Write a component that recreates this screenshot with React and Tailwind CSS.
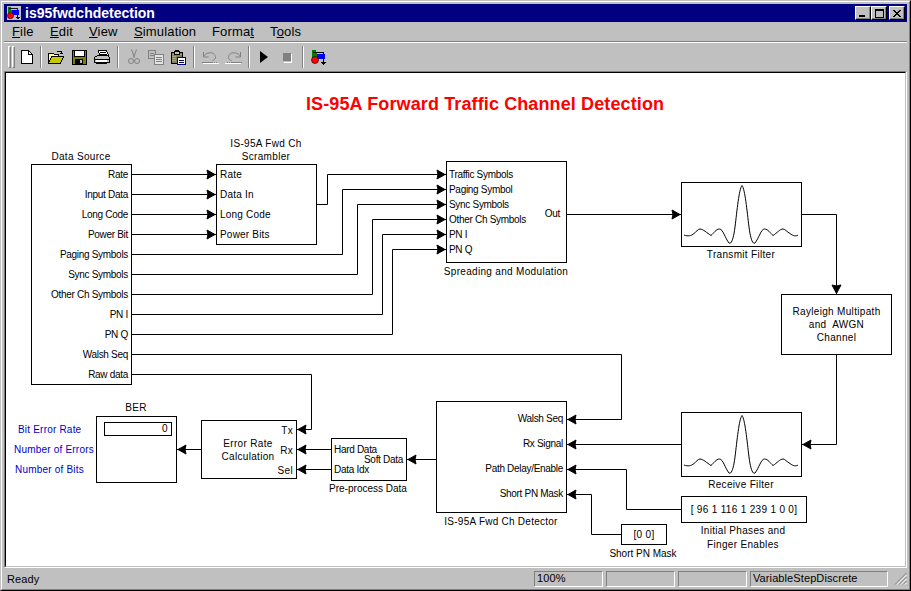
const FONT = "font-['Liberation_Sans',Arial,sans-serif]";

function Grip({ className = "" }) {
  return <div className={`border border-t-white border-l-white border-r-[#808080] border-b-[#808080] ${className}`} />;
}

function WinBtn({ children, className = "" }) {
  return (
    <div className={`w-[16px] h-[14px] bg-[#c0c0c0] border border-t-white border-l-white border-r-black border-b-black shadow-[inset_-1px_-1px_0_#808080] flex items-center justify-center ${className}`}>
      {children}
    </div>
  );
}

function Sep() {
  return <div className="w-[2px] h-[22px] border-l border-l-[#808080] border-r border-r-white" />;
}

function ToolBtn({ children, className = "" }) {
  return <div className={`w-[23px] h-[22px] flex items-center justify-center ${className}`}>{children}</div>;
}

const IconNew = () => (
  <svg width="16" height="16" viewBox="0 0 16 16" shapeRendering="crispEdges">
    <path d="M2.500 1.500h7l4 4v9h-11z" fill="#fff" stroke="#000" />
    <path d="M9.500 1.500v4h4" fill="none" stroke="#000" />
  </svg>
);
const IconOpen = () => (
  <svg width="16" height="16" viewBox="0 0 16 16" shapeRendering="crispEdges">
    <path d="M0.500 4.500h5l1 1h4v2h-7l-3 7z" fill="#ffff99" stroke="#000" />
    <path d="M0.500 14.500l3-7h12l-3 7z" fill="#c8c800" stroke="#000" />
    <path d="M9 2h2M11 2l2 1M13 2v3M12 4h3" stroke="#000" fill="none" />
  </svg>
);
const IconSave = () => (
  <svg width="16" height="16" viewBox="0 0 16 16" shapeRendering="crispEdges">
    <rect x="1" y="1" width="14" height="14" fill="#808000" stroke="#000" />
    <rect x="3" y="1" width="10" height="6" fill="#fff" stroke="#000" />
    <rect x="4" y="10" width="8" height="5" fill="#000" />
    <rect x="9" y="11" width="2" height="3" fill="#c0c0c0" />
  </svg>
);
const IconPrint = () => (
  <svg width="17" height="16" viewBox="0 0 17 16" shapeRendering="crispEdges">
    <path d="M5.500 1.500h8l2 5h-9z" fill="#fff" stroke="#000" />
    <path d="M7 3h6M7 5h7" stroke="#000" />
    <path d="M1.500 8.500l3-2h10l2 2v5h-15z" fill="#c0c0c0" stroke="#000" />
    <path d="M2 10h14" stroke="#000" />
    <path d="M3 14h11v1H3z" fill="#000" />
    <rect x="3" y="11" width="11" height="2" fill="#fff" />
  </svg>
);
const IconCut = () => (
  <svg width="16" height="16" viewBox="0 0 16 16" fill="none" stroke="#808080">
    <path d="M5.500 0.500l3 8M10.500 0.500l-3 8" />
    <circle cx="5" cy="12" r="2.500" />
    <circle cx="11" cy="12" r="2.500" />
  </svg>
);
const IconCopy = () => (
  <svg width="16" height="16" viewBox="0 0 16 16" shapeRendering="crispEdges">
    <path d="M0.500 1.500h7v8h-7z" fill="#c0c0c0" stroke="#808080" />
    <path d="M2 4h4M2 6h4" stroke="#808080" />
    <path d="M6.500 5.500h9v10h-9z" fill="#e4e4e4" stroke="#808080" />
    <path d="M8 8h6M8 10h6M8 12h6" stroke="#808080" />
  </svg>
);
const IconPaste = () => (
  <svg width="16" height="16" viewBox="0 0 16 16" shapeRendering="crispEdges">
    <path d="M1.500 3.500h11v11h-11z" fill="#808060" stroke="#000" />
    <path d="M2 5h10M2 7h4M2 9h4M2 11h4" stroke="#a8a880" />
    <path d="M4.500 2.500h5v3h-5z" fill="#c8c8a0" stroke="#000" />
    <path d="M5 1h4" stroke="#000" />
    <path d="M7.500 8.500h8v7h-8z" fill="#fff" stroke="#000080" />
    <path d="M9 11h5M9 13h5" stroke="#000080" />
  </svg>
);
const IconUndo = ({ flip }) => (
  <svg width="17" height="16" viewBox="0 0 17 16" fill="none" stroke="#808080" className={flip ? "-scale-x-100" : ""}>
    <path d="M1.500 3v5h5" />
    <path d="M1.500 7.500c2-4 9-5 11-2s1 5-2 6" />
    <path d="M0 13.500h16" strokeDasharray="11 1 1 1 1 1" />
    <path d="M1 14.500h16" stroke="#fff" />
  </svg>
);
const IconPlay = () => (
  <svg width="16" height="16" viewBox="0 0 16 16">
    <path d="M4 2l8 6-8 6z" fill="#000" />
  </svg>
);
const IconStop = () => (
  <svg width="16" height="16" viewBox="0 0 16 16" shapeRendering="crispEdges">
    <rect x="4" y="4" width="8" height="8" fill="#808080" />
    <path d="M12 4v9H4" stroke="#fff" fill="none" transform="translate(.5 .5)" />
  </svg>
);
const IconSim = ({ small }) => (
  <svg width={small ? 14 : 16} height={small ? 14 : 16} viewBox="0 0 16 16" shapeRendering="crispEdges">
    <rect x="0" y="0" width="16" height="16" fill={small ? "#c0c0c0" : "none"} />
    <path d="M1 1h4v3h1v5H1z" fill="#008000" />
    <rect x="6" y="5" width="8" height="5" fill="#0000ff" />
    <path d="M2 3h10v11" stroke="#000" fill="none" />
    <circle cx="4" cy="11" r="3.500" fill="#ff0000" stroke="#000" strokeWidth=".6" shapeRendering="auto" />
    <path d="M10 13h5M11 14h3M12 15h1" stroke="#000" />
  </svg>
);

const Ripple = () => (
  <svg className="absolute inset-0" width="119" height="63" viewBox="0 0 119 63" fill="none" stroke="#000">
    <path d="M2 52C6 53.500 9 53 12 50.500C14 49 16 46 18 46C21 46 25 50 29 52.500C32 50 34 46 37.500 46C41 46 43 55 47 60C50 62 52 52 53 44C55 28 57 6 60 2.500C63 6 65 28 67 44C68 52 70 62 73 60C77 55 79 46 82.500 46C86 46 88 50 91 52.500C95 50 98 46 101 46C103 46 105 49 108 50.500C111 53 114 53.500 116 52" />
  </svg>
);

function Wires() {
  const wires = [
    "M126 102.500H210", "M126 122.500H210", "M126 142.500H210", "M126 162.500H210",
    "M311 132.500H321.500V102.500H440",
    "M126 182.500H336.500V117.500H440",
    "M126 202.500H351.500V132.500H440",
    "M126 222.500H366.500V147.500H440",
    "M126 242.500H376.500V162.500H440",
    "M126 262.500H386.500V177.500H440",
    "M561 142.500H675",
    "M795 142.500H830.500V222",
    "M830.500 282V372.500H796",
    "M126 282.500H615.500V347.500H561",
    "M675 372.500H561",
    "M675 437.500H620.500V397.500H561",
    "M615 462.500H585.500V422.500H561",
    "M126 302.500H305.500V357.500H291",
    "M325 377.500H291", "M325 397.500H291",
    "M430 387.500H401",
    "M195 377.500H171",
  ];
  const right = [[210,102.5],[210,122.5],[210,142.5],[210,162.5],[440,102.5],[440,117.5],[440,132.5],[440,147.5],[440,162.5],[440,177.5],[675,142.5]];
  const left = [[561,347.5],[561,372.5],[561,397.5],[561,422.5],[796,372.5],[291,357.5],[291,377.5],[291,397.5],[401,387.5],[171,377.5]];
  return (
    <svg className="absolute inset-0" width="899" height="497" viewBox="0 0 899 497">
      {wires.map((d) => <path key={d} d={d} fill="none" stroke="#000" />)}
      {right.map(([x, y]) => <path key={`r${x}${y}`} d={`M${x - 9} ${y - 4.5}L${x - 1} ${y}L${x - 9} ${y + 4.5}L${x - 8} ${y}Z`} fill="#000" stroke="#000" />)}
      {left.map(([x, y]) => <path key={`l${x}${y}`} d={`M${x + 9} ${y - 4.5}L${x + 1} ${y}L${x + 9} ${y + 4.5}L${x + 8} ${y}Z`} fill="#000" stroke="#000" />)}
      <path d="M830.500 221.500L826 213L830.500 214L835 213Z" fill="#000" stroke="#000" />
    </svg>
  );
}

const boxCls = "absolute bg-white border border-black";
const capCls = "absolute text-center leading-[13px] whitespace-nowrap -translate-x-1/2";

function Row({ h, children }) {
  return <div className={`${h} flex items-center whitespace-nowrap`}>{children}</div>;
}

export default function App() {
  return (
    <div className={`${FONT} w-[911px] h-[591px] bg-[#c0c0c0] flex flex-col overflow-hidden border border-t-[#c0c0c0] border-l-[#c0c0c0] border-r-black border-b-black`}>
      <div className="flex-1 min-h-0 flex flex-col border border-t-white border-l-white border-r-[#808080] border-b-[#808080] p-[2px]">
        {/* title */}
        <div className="h-[18px] shrink-0 bg-[#000080] flex items-center pl-[3px] pr-[2px]">
          <IconSim small />
          <div className="ml-[4px] text-white font-bold text-[14px] leading-none">is95fwdchdetection</div>
          <div className="ml-auto flex items-center">
            <WinBtn>
              <div className="w-[6px] h-[2px] bg-black mt-[6px] -ml-[2px]" />
            </WinBtn>
            <WinBtn>
              <div className="w-[9px] h-[9px] border border-black border-t-2" />
            </WinBtn>
            <WinBtn className="ml-[2px]">
              <svg width="8" height="7" viewBox="0 0 8 7" shapeRendering="crispEdges"><path d="M0 0h2v1h1v1h2V1h1V0h2v1H7v1H6v1H5v1h1v1h1v1h1v1H6V6H5V5H3v1H2v1H0V6h1V5h1V4h1V3H2V2H1V1H0z" fill="#000" /></svg>
            </WinBtn>
          </div>
        </div>
        {/* menu */}
        <div className="h-[20px] shrink-0 flex items-center text-[13px] tracking-[0.15px] text-black leading-none pl-[8px] border-b border-b-[#808080]">
          <span className="w-[38px]"><span className="underline">F</span>ile</span>
          <span className="w-[39px]"><span className="underline">E</span>dit</span>
          <span className="w-[45px]"><span className="underline">V</span>iew</span>
          <span className="w-[78px]"><span className="underline">S</span>imulation</span>
          <span className="w-[58px]">Forma<span className="underline">t</span></span>
          <span>T<span className="underline">o</span>ols</span>
        </div>
        {/* toolbar */}
        <div className="h-[29px] shrink-0 border-t border-t-white flex items-center pl-[4px]">
          <Grip className="w-[3px] h-[22px] mr-[1px]" />
          <Grip className="w-[3px] h-[22px]" />
          <ToolBtn><IconNew /></ToolBtn>
          <div className="w-[6px] flex justify-center"><Sep /></div>
          <ToolBtn><IconOpen /></ToolBtn>
          <ToolBtn><IconSave /></ToolBtn>
          <ToolBtn><IconPrint /></ToolBtn>
          <div className="w-[9px] flex justify-center"><Sep /></div>
          <ToolBtn><IconCut /></ToolBtn>
          <ToolBtn className="-ml-[1px]"><IconCopy /></ToolBtn>
          <ToolBtn className="-ml-[1px]"><IconPaste /></ToolBtn>
          <div className="w-[10px] flex justify-center"><Sep /></div>
          <ToolBtn><IconUndo /></ToolBtn>
          <ToolBtn><IconUndo flip /></ToolBtn>
          <div className="w-[7px] flex justify-center"><Sep /></div>
          <ToolBtn><IconPlay /></ToolBtn>
          <ToolBtn><IconStop /></ToolBtn>
          <div className="w-[9px] flex justify-center"><Sep /></div>
          <ToolBtn><IconSim /></ToolBtn>
        </div>
        {/* canvas */}
        <div className="flex-1 min-h-0 border border-t-[#808080] border-l-[#808080] border-r-white border-b-white">
          <div className="h-full border border-t-black border-l-black border-r-[#c0c0c0] border-b-[#c0c0c0]">
          <div className="h-full bg-white overflow-hidden">
          <div className="relative h-full -mt-[1px] text-[10px] leading-[13px] tracking-[0.32px] text-black">
            <div className="absolute left-[300px] top-[22px] text-[red] font-bold text-[18px] leading-[20px] tracking-[0.12px] whitespace-nowrap">IS-95A Forward Traffic Channel Detection</div>

            <Wires />

            {/* Data Source */}
            <div className={`${capCls} left-[75px] top-[78px]`}>Data Source</div>
            <div className={`${boxCls} left-[25px] top-[92px] w-[101px] h-[221px] pr-[3px] flex flex-col items-end tracking-[-0.3px]`}>
              {["Rate","Input Data","Long Code","Power Bit","Paging Symbols","Sync Symbols","Other Ch Symbols","PN I","PN Q","Walsh Seq","Raw data"].map((t) => (
                <Row key={t} h="h-[20px]">{t}</Row>
              ))}
            </div>

            {/* Scrambler */}
            <div className={`${capCls} left-[260px] top-[65px]`}>IS-95A Fwd Ch<br />Scrambler</div>
            <div className={`${boxCls} left-[210px] top-[92px] w-[101px] h-[81px] pl-[3px] flex flex-col tracking-[0.2px]`}>
              {["Rate","Data In","Long Code","Power Bits"].map((t) => <Row key={t} h="h-[20px]">{t}</Row>)}
            </div>

            {/* Spreading */}
            <div className={`${boxCls} left-[440px] top-[89px] w-[121px] h-[102px] pt-[5px] pl-[2px] flex flex-col tracking-[-0.3px]`}>
              {["Traffic Symbols","Paging Symbol","Sync Symbols","Other Ch Symbols","PN I","PN Q"].map((t) => <Row key={t} h="h-[15px]">{t}</Row>)}
              <span className="absolute right-[6px] top-[45px]">Out</span>
            </div>
            <div className={`${capCls} left-[500px] top-[193px]`}>Spreading and Modulation</div>

            {/* Transmit filter */}
            <div className={`${boxCls} left-[675px] top-[110px] w-[121px] h-[65px]`}><Ripple /></div>
            <div className={`${capCls} left-[735px] top-[176px]`}>Transmit Filter</div>

            {/* Rayleigh */}
            <div className={`${boxCls} left-[775px] top-[222px] w-[111px] h-[61px] flex flex-col items-center justify-center text-center`}>
              <div>Rayleigh Multipath</div>
              <div>and&nbsp; AWGN</div>
              <div>Channel</div>
            </div>

            {/* Receive filter */}
            <div className={`${boxCls} left-[675px] top-[340px] w-[121px] h-[65px]`}><Ripple /></div>
            <div className={`${capCls} left-[735px] top-[406px]`}>Receive Filter</div>

            {/* Constant */}
            <div className={`${boxCls} left-[675px] top-[424px] w-[126px] h-[27px] flex items-center justify-center`}>[ 96 1 116 1 239 1 0 0]</div>
            <div className={`${capCls} left-[737px] top-[452px] leading-[14px]`}>Initial Phases and<br />Finger Enables</div>

            {/* Short PN */}
            <div className={`${boxCls} left-[615px] top-[452px] w-[46px] h-[21px] flex items-center justify-center`}>[0 0]</div>
            <div className={`${capCls} left-[637px] top-[475px] tracking-normal`}>Short PN Mask</div>

            {/* Detector */}
            <div className={`${boxCls} left-[430px] top-[329px] w-[131px] h-[112px] pt-[4px] pr-[3px] flex flex-col items-end tracking-[-0.3px]`}>
              {["Walsh Seq","Rx Signal","Path Delay/Enable","Short PN Mask"].map((t) => <Row key={t} h="h-[25px]">{t}</Row>)}
            </div>
            <div className={`${capCls} left-[495px] top-[443px] tracking-[0.25px]`}>IS-95A Fwd Ch Detector</div>

            {/* Pre-process */}
            <div className={`${boxCls} left-[325px] top-[366px] w-[76px] h-[43px] pl-[2px] tracking-[-0.3px]`}>
              <Row h="h-[20px]">Hard Data</Row>
              <Row h="h-[20px]">Data Idx</Row>
              <span className="absolute right-[3px] top-[14px]">Soft Data</span>
            </div>
            <div className={`${capCls} left-[362px] top-[410px] tracking-normal`}>Pre-process Data</div>

            {/* Error rate */}
            <div className={`${boxCls} left-[195px] top-[348px] w-[96px] h-[59px] pr-[3px] flex flex-col items-end`}>
              <div className="-mt-[1px]">
                {["Tx","Rx","Sel"].map((t) => <Row key={t} h="h-[20px] justify-end">{t}</Row>)}
              </div>
              <div className="absolute left-[18px] top-[16px] w-[56px] text-center leading-[13px]">Error Rate Calculation</div>
            </div>

            {/* BER */}
            <div className={`${capCls} left-[130px] top-[329px]`}>BER</div>
            <div className={`${boxCls} left-[90px] top-[344px] w-[81px] h-[67px] p-[5px_4px_0_7px]`}>
              <div className="h-[14px] border border-black text-right pr-[3px] leading-[12px]">0</div>
            </div>

            {/* Blue labels */}
            <div className="absolute left-[8px] top-[347px] w-[86px] text-[#0000c8] tracking-[0.2px]">
              <div className="h-[20px] flex items-center pl-[4px]">Bit Error Rate</div>
              <div className="h-[20px] flex items-center whitespace-nowrap">Number of Errors</div>
              <div className="h-[20px] flex items-center pl-[1px]">Number of Bits</div>
            </div>
          </div>
          </div>
          </div>
        </div>
        {/* status */}
        <div className="h-[19px] shrink-0 flex items-center gap-[3px] text-[11px] tracking-[0.1px] leading-none text-black pt-[2px]">
          <div className="w-[527px] pl-[3px] pt-[1px]">Ready</div>
          <div className="w-[69px] h-[16px] border border-t-[#808080] border-l-[#808080] border-r-white border-b-white pl-[2px] flex items-center">100%</div>
          <div className="w-[69px] h-[16px] border border-t-[#808080] border-l-[#808080] border-r-white border-b-white" />
          <div className="w-[69px] h-[16px] border border-t-[#808080] border-l-[#808080] border-r-white border-b-white" />
          <div className="w-[138px] h-[16px] border border-t-[#808080] border-l-[#808080] border-r-white border-b-white pl-[2px] flex items-center">VariableStepDiscrete</div>
          <svg className="ml-[3px]" width="13" height="13" viewBox="0 0 13 13">
            <path d="M12.500 1L1 12.500M12.500 5L5 12.500M12.500 9L9 12.500" stroke="#808080" fill="none" />
            <path d="M12.500 3L3 12.500M12.500 7L7 12.500M12.500 11L11 12.500" stroke="#fff" fill="none" />
          </svg>
        </div>
      </div>
    </div>
  );
}
